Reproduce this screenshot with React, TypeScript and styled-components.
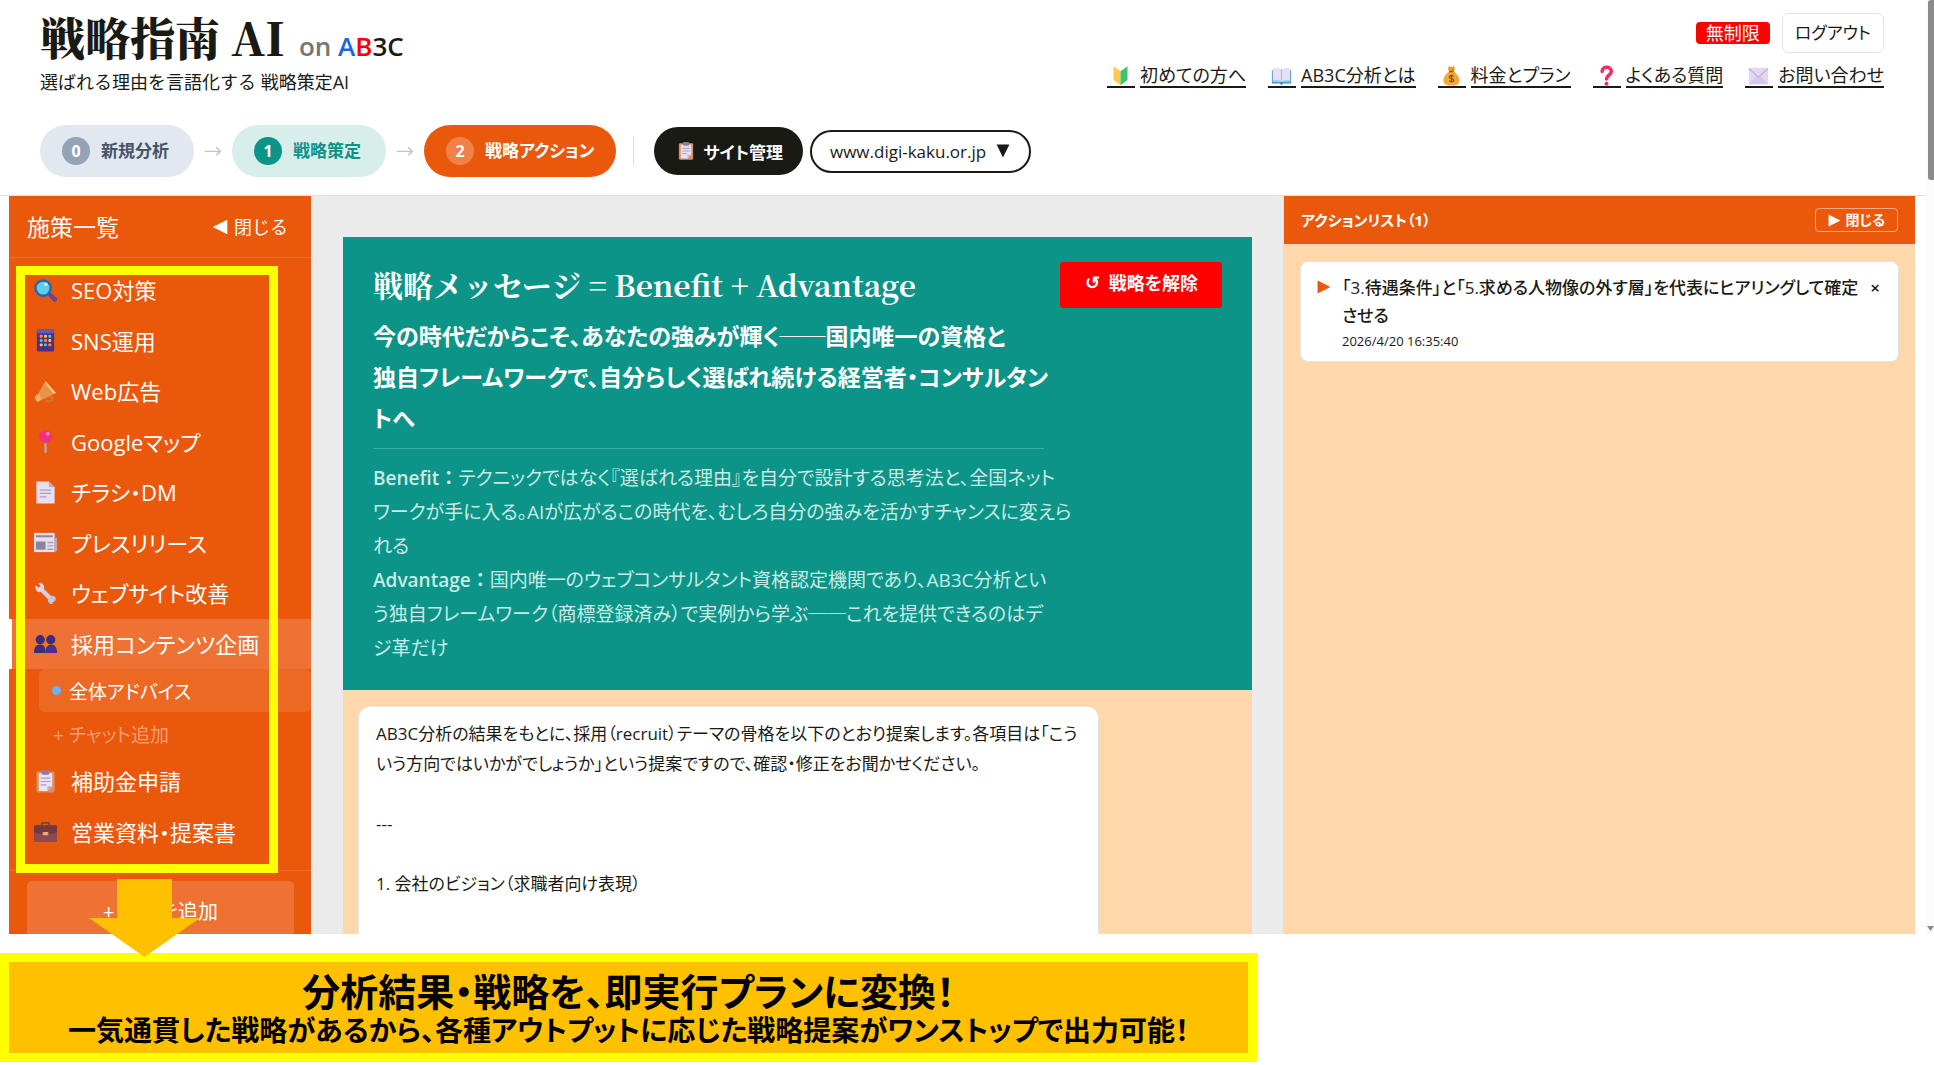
import React from "react";
import styled, { createGlobalStyle, css } from "styled-components";

const sans = `"Open Sans", "Noto Sans CJK JP", sans-serif`;
const serif = `"Noto Serif CJK JP", "Noto Serif JP", "Liberation Serif", "Noto Sans CJK JP", serif`;

const GlobalStyle = createGlobalStyle`
  *, *::before, *::after { box-sizing: border-box; }
  body {
    margin: 0;
    background: #fff;
    color: #1a1a14;
    font-family: ${sans};
    font-feature-settings: "palt";
  }
  button, select { font: inherit; font-feature-settings: inherit; color: inherit; margin: 0; padding: 0; border: 0; background: none; cursor: pointer; }
  h1, h2, p, ul { margin: 0; padding: 0; }
  ul { list-style: none; }
`;

/* ---------- Page frame ---------- */

const Page = styled.div`
  position: relative;
  display: flex;
  flex-direction: column;
  height: 100vh;
  padding-bottom: 3px;
  overflow: hidden;
`;

const Header = styled.header`
  flex: none;
  display: flex;
  flex-direction: column;
  height: 196px;
  padding: 10px 50px 18px 40px;
  border-bottom: 1px solid #e0e0e0;
`;

const HeaderTop = styled.div`
  flex: 1;
  display: flex;
  justify-content: space-between;
  align-items: flex-start;
`;

const Brand = styled.h1`
  display: flex;
  align-items: baseline;
  gap: 14px;
  font-family: ${serif};
  font-size: 45px;
  font-weight: 900;
  line-height: 54px;
  white-space: nowrap;
`;

const BrandSub = styled.span`
  font-family: ${sans};
  font-size: 26px;
  font-weight: 600;
  line-height: 30px;
  color: #78756f;
`;

const Ink = styled.span<{ $color: string }>`
  color: ${(p) => p.$color};
`;

const Tagline = styled.p`
  margin-top: 6px;
  font-size: 18px;
  line-height: 24px;
  font-feature-settings: normal;
`;

const HeaderSide = styled.div`
  display: flex;
  flex-direction: column;
  align-items: flex-end;
  gap: 11px;
  padding-top: 3px;
`;

const Account = styled.div`
  display: flex;
  align-items: center;
  gap: 12px;
`;

const PlanBadge = styled.span`
  padding: 0 10px;
  border-radius: 4px;
  background: #ff0000;
  color: #fff;
  font-size: 18px;
  line-height: 22px;
`;

const LogoutButton = styled.button`
  height: 40px;
  padding: 0 12px;
  border: 1px solid #e5e5df;
  border-radius: 6px;
  font-size: 17px;
  line-height: 36px;
`;

const HelpNav = styled.nav`
  display: flex;
  gap: 22px;
`;

const HelpLink = styled.a`
  display: flex;
  align-items: center;
  gap: 5px;
  color: inherit;
  font-size: 18px;
  line-height: 22px;
  text-decoration: none;
  white-space: nowrap;
  span {
    height: 24px;
    border-bottom: 2px solid #1a1a14;
  }
  span:first-child {
    width: 28px;
    padding: 1px 3px 0;
  }
`;

const StepBar = styled.div`
  display: flex;
  align-items: center;
`;

const Arrow = styled.span`
  width: 38px;
  color: #c4c4c4;
  font-size: 18px;
  line-height: 24px;
  text-align: center;
`;

const tones = {
  idle: { bg: "#e2e8f0", fg: "#475569", dot: "#94a3b8" },
  done: { bg: "#d8eeea", fg: "#0d9488", dot: "#0d9488" },
  active: { bg: "#ea580c", fg: "#fff", dot: "#f08149" },
};

const Step = styled.button<{ $tone: keyof typeof tones }>`
  display: flex;
  align-items: center;
  gap: 11px;
  height: 52px;
  padding: 0 ${(p) => (p.$tone === "active" ? 22 : 25)}px 0 22px;
  border-radius: 26px;
  background: ${(p) => tones[p.$tone].bg};
  color: ${(p) => tones[p.$tone].fg};
  font-size: 17px;
  font-weight: 700;
  line-height: 26px;
  white-space: nowrap;
`;

const StepNumber = styled.span<{ $tone: keyof typeof tones }>`
  width: 28px;
  border-radius: 50%;
  background: ${(p) => tones[p.$tone].dot};
  color: #fff;
  font-size: 16px;
  line-height: 28px;
`;

const Divider = styled.span`
  width: 1px;
  height: 30px;
  margin: 0 20px 0 17px;
  background: #dcdcdc;
`;

const SiteButton = styled.button`
  display: flex;
  align-items: center;
  gap: 8px;
  height: 48px;
  padding: 0 20px 0 23px;
  border-radius: 24px;
  background: #1a1a14;
  color: #fff;
  font-size: 17px;
  font-weight: 700;
  white-space: nowrap;
`;

const SitePicker = styled.label`
  display: flex;
  align-items: center;
  gap: 9px;
  height: 43px;
  margin-left: 7px;
  padding: 0 19px 0 18px;
  border: 2px solid #1a1a14;
  border-radius: 22px;
  font-size: 17px;
  font-weight: 500;
  select {
    appearance: none;
    outline: 0;
  }
`;

/* ---------- Workspace ---------- */

const Workspace = styled.main`
  flex: 1;
  min-height: 0;
  display: flex;
  margin: 0 19px 19px 9px;
  overflow: hidden;
  background: #ebebeb;
`;

const Sidebar = styled.aside`
  flex: none;
  width: 303px;
  border-right: 1px solid #f5f0ec;
  background: #ea580c;
  color: #fff;
`;

const SidebarHead = styled.div`
  display: flex;
  align-items: center;
  justify-content: space-between;
  height: 62px;
  padding: 0 23px 0 18px;
  border-bottom: 1px solid rgba(255, 255, 255, 0.15);
`;

const SidebarTitle = styled.h2`
  font-size: 23px;
  font-weight: 400;
  line-height: 30px;
`;

const SidebarToggle = styled.button`
  display: flex;
  align-items: center;
  gap: 6px;
  font-size: 18px;
  line-height: 24px;
  font-feature-settings: normal;
`;

const MenuList = styled.ul`
  display: flex;
  flex-direction: column;
  min-height: 613px;
  padding: 7px 0 13px;
  border-bottom: 1px solid rgba(255, 255, 255, 0.15);
`;

const MenuItem = styled.li<{ $active?: boolean }>`
  flex: 1;
  display: flex;
  border-left: 3px solid transparent;
  ${(p) =>
    p.$active &&
    css`
      border-left-color: #fff;
      background: rgba(255, 255, 255, 0.16);
    `}
`;

const MenuButton = styled.button`
  flex: 1;
  display: flex;
  align-items: center;
  gap: 14px;
  padding: 0 22px;
  font-size: 22px;
  line-height: 30px;
  text-align: left;
  white-space: nowrap;
`;

const SubItem = styled.li`
  flex: none;
  margin-left: 30px;
  border-radius: 6px;
  background: rgba(255, 255, 255, 0.1);
`;

const SubButton = styled.button`
  display: flex;
  align-items: center;
  gap: 8px;
  height: 43px;
  padding: 0 13px;
  font-size: 19px;
  white-space: nowrap;
`;

const Dot = styled.i`
  width: 9px;
  height: 9px;
  border-radius: 50%;
  background: #66b2ff;
`;

const AddChat = styled.button`
  height: 44px;
  margin-left: 44px;
  color: rgba(255, 255, 255, 0.42);
  font-size: 19px;
  text-align: left;
`;

const AddPlan = styled.button`
  display: block;
  width: calc(100% - 35px);
  height: 58px;
  margin: 10px 17px 0 18px;
  border-radius: 5px;
  background: rgba(255, 255, 255, 0.16);
  font-size: 20px;
`;

const Center = styled.section`
  flex: 1;
  min-width: 0;
  padding: 41px 31px 0;
`;

const Strategy = styled.div`
  display: flex;
  justify-content: space-between;
  align-items: flex-start;
  gap: 15px;
  height: 453px;
  padding: 25px 30px 0 30px;
  background: #0d9488;
  color: #fff;
`;

const StrategyBody = styled.div`
  flex: none;
  width: 671px;
  white-space: nowrap;
`;

const StrategyTitle = styled.h2`
  font-family: ${serif};
  font-size: 30px;
  font-weight: 700;
  line-height: 44px;
  font-feature-settings: normal;
`;

const StrategyMessage = styled.p`
  margin-top: 10px;
  padding-bottom: 9px;
  border-bottom: 1px solid rgba(255, 255, 255, 0.2);
  font-size: 23px;
  font-weight: 700;
  line-height: 41px;
`;

const StrategyDetail = styled.p`
  margin-top: 12px;
  color: #c8ebe5;
  font-size: 19px;
  line-height: 34px;
  b {
    font-weight: 600;
    font-feature-settings: normal;
  }
`;

const ReleaseButton = styled.button`
  display: flex;
  align-items: center;
  gap: 9px;
  height: 46px;
  padding: 0 24px 7px 25px;
  border-radius: 3px;
  background: #ff0000;
  font-size: 18px;
  font-weight: 700;
  white-space: nowrap;
`;

const ChatArea = styled.div`
  min-height: 400px;
  padding: 16px 15px;
  background: #fed7aa;
`;

const Bubble = styled.div`
  width: 741px;
  min-height: 400px;
  padding: 12px 17px;
  border: 1px solid #e5e5df;
  border-radius: 12px;
  background: #fff;
  font-size: 17px;
  line-height: 30px;
  white-space: nowrap;
`;

const ActionPanel = styled.aside`
  flex: none;
  width: 632px;
  border-left: 1px solid #e5e0da;
  background: #fed7aa;
`;

const ActionHead = styled.div`
  display: flex;
  align-items: center;
  justify-content: space-between;
  height: 49px;
  padding: 0 17px;
  border-bottom: 1px solid #f5d3bb;
  background: #ea580c;
  color: #fff;
  font-weight: 700;
`;

const ActionTitle = styled.h2`
  font-size: 15px;
  line-height: 24px;
`;

const ActionToggle = styled.button`
  display: flex;
  align-items: center;
  gap: 4px;
  height: 24px;
  padding: 0 12px;
  border: 1px solid rgba(255, 255, 255, 0.5);
  border-radius: 4px;
  font-size: 14px;
  line-height: 20px;
`;

const ActionCard = styled.article`
  display: flex;
  align-items: flex-start;
  margin: 16px;
  padding: 12px 18px 9px 16px;
  border: 1px solid #e5e5df;
  border-radius: 8px;
  background: #fff;
`;

const Marker = styled.span`
  flex: none;
  width: 25px;
  line-height: 28px;
`;

const ActionText = styled.div`
  flex: 1;
  min-width: 0;
  font-size: 17px;
  font-weight: 500;
  line-height: 28px;
`;

const ActionTime = styled.time`
  display: block;
  font-size: 13px;
  font-weight: 400;
  line-height: 22px;
`;

const RemoveButton = styled.button`
  font-size: 17px;
  font-weight: 600;
  line-height: 28px;
`;

/* ---------- Promotional callout ---------- */

const Highlight = styled.div`
  position: absolute;
  left: 16px;
  top: 266px;
  width: 262px;
  height: 607px;
  border: 9px solid #ffff00;
  pointer-events: none;
`;

const DownArrow = styled.svg`
  position: absolute;
  left: 89px;
  top: 879px;
  width: 111px;
  height: 78px;
  pointer-events: none;
`;

const Banner = styled.section`
  flex: none;
  width: 65%;
  height: 109px;
  padding: 9px 0 0;
  border: 9px solid #ffff00;
  background: #ffc000;
  color: #000;
  font-family: "Liberation Sans", "Noto Sans CJK JP", sans-serif;
  font-weight: 700;
  text-align: center;
  white-space: nowrap;
`;

const BannerTitle = styled.p`
  font-size: 38px;
  line-height: 44px;
`;

const BannerText = styled.p`
  font-size: 28px;
  line-height: 34px;
`;

const ScrollTrack = styled.div`
  position: absolute;
  top: 0;
  right: 0;
  width: 8px;
  height: 934px;
  background: #fcfcfc;
`;

const ScrollThumb = styled.div`
  width: 6px;
  height: 180px;
  margin-left: 2px;
  border-radius: 3px 0 0 3px;
  background: #8b8b8b;
`;

const ScrollEnd = styled.svg`
  position: absolute;
  left: 1px;
  bottom: 2px;
`;

/* ---------- Drawings ---------- */

const IconSvg = styled.svg`
  display: block;
  flex: none;
`;

const Svg = ({ size = 23, children }: { size?: number; children: React.ReactNode }) => (
  <IconSvg width={size} height={size} viewBox="0 0 24 24" aria-hidden="true">
    {children}
  </IconSvg>
);

const Triangle = ({ dir, size, color = "currentColor" }: { dir: "left" | "right" | "down"; size: number; color?: string }) => {
  const d = { left: "M23 1v22L1 12z", right: "M1 1v22l22-11z", down: "M1 1h22L12 23z" }[dir];
  return (
    <svg width={size} height={size} viewBox="0 0 24 24" aria-hidden="true">
      <path d={d} fill={color} />
    </svg>
  );
};

const clipboard = (
  <>
    <rect x="2.5" y="1.5" width="19" height="22" rx="1.5" fill="#d9905f" />
    <path d="M5 3.5h14v14L14 22H5z" fill="#e9e2f3" />
    <path d="M19 17h-5v5z" fill="#b8a9d0" />
    <rect x="8" y="0" width="8" height="5" rx="1.5" fill="#8d7f9c" />
    <path d="M7 8.500h10M7 12h10M7 15.500h6" stroke="#a99bbb" strokeWidth="1.300" />
  </>
);

const icons: Record<string, React.ReactNode> = {
  search: (
    <>
      <path d="M15 15l7 6.500" stroke="#6b4391" strokeWidth="4.500" strokeLinecap="round" />
      <circle cx="9.500" cy="9.500" r="8" fill="#62cdea" stroke="#256aa5" strokeWidth="2.600" />
      <circle cx="12.500" cy="5.500" r="1.800" fill="#c6f3fb" />
    </>
  ),
  phone: (
    <>
      <rect x="3" y="0.500" width="18" height="23" rx="1.500" fill="#4c2f86" />
      <rect x="3" y="0.500" width="18" height="4" rx="1.500" fill="#5b5fc0" />
      {[6.5, 11, 15.5].map((y, r) =>
        [6, 10.5, 15].map((x, c) => (
          <rect key={`${x}${y}`} x={x} y={y - 0.5} width="3" height="3" rx="1" fill={["#ff8a3c", "#ffc83c", "#3cc8f0"][(r * 2 + c) % 3]} />
        ))
      )}
    </>
  ),
  megaphone: (
    <>
      <path d="M12 20c0-3 6-5 7-1s-6 4-6 2" fill="none" stroke="#d17a3a" strokeWidth="2" />
      <path d="M4 15L12 1l11 12.500L7 21z" fill="#e9934b" />
      <path d="M12 1l11 12.500-3 .5L11.500 3z" fill="#ffc372" />
      <path d="M1 17l4-3 3 6.500-4 2.500c-2-1-3-3-3-6z" fill="#ffae69" />
    </>
  ),
  pin: (
    <>
      <path d="M12 11v12" stroke="#b9a8ae" strokeWidth="2.400" strokeLinecap="round" />
      <circle cx="12" cy="7" r="6.800" fill="#f2307a" />
      <circle cx="14.500" cy="4" r="1.900" fill="#ff9ac4" />
    </>
  ),
  page: (
    <>
      <path d="M2.500 .5h13L21.500 6.500v17h-19z" fill="#e8e0f2" />
      <path d="M15.500 .5v6h6z" fill="#b9a9d2" />
      <path d="M6 9.500h12M6 13h12M6 16.500h7" stroke="#a99bbb" strokeWidth="1.300" />
    </>
  ),
  news: (
    <>
      <path d="M0 2h21.500v20H0z" fill="#e6dff0" />
      <path d="M21.500 7H24v14l-2.500 1z" fill="#b6a9c9" />
      <path d="M2 5.500h17.500" stroke="#8d819b" strokeWidth="2" />
      <rect x="2" y="11" width="10" height="8.500" fill="#8d819b" />
      <path d="M14 12h6M14 15.500h6M14 19h6" stroke="#a99bbb" strokeWidth="1.500" />
    </>
  ),
  wrench: (
    <>
      <path d="M7 7l12 12" stroke="#d6cce2" strokeWidth="4.600" strokeLinecap="round" />
      <path d="M2 3.500l3.500 3 1.800-1.800L4.500 1.500C8 0 11.500 3 10.500 7L7 10.500C3 11.500 .5 7.500 2 3.500z" fill="#ded5e8" />
      <path d="M22 20l-3-2-2 1.500 3 3c-3 1.500-6-1-5.500-4.500L18 14.500c3.500-.5 6 2.500 4 5.500z" fill="#cbbfd9" />
    </>
  ),
  people: (
    <>
      <circle cx="6.500" cy="8" r="4.800" fill="#3f2a7d" />
      <circle cx="17.500" cy="8" r="4.800" fill="#3f2a7d" />
      <path d="M0 22c0-6 2-9 6.500-9s5.500 3 5.500 9z" fill="#3f2a7d" />
      <path d="M12 22c0-6 2-9 6-9s6 3 6 9z" fill="#4a2f85" />
    </>
  ),
  clipboard,
  briefcase: (
    <>
      <path d="M8 6V4.500Q8 3 9.500 3h5Q16 3 16 4.500V6" fill="none" stroke="#5b4860" strokeWidth="1.800" />
      <rect x="0" y="5.500" width="24" height="17.500" rx="1.500" fill="#8a4a50" />
      <path d="M1.500 5.500h21Q24 5.500 24 7v6L15 15H9L0 13V7Q0 5.500 1.500 5.500z" fill="#74383f" />
      <rect x="9" y="12.500" width="6" height="3.500" rx=".8" fill="#f3a27d" />
    </>
  ),
  beginner: (
    <>
      <path d="M4 1.500l8 5.500v16l-8-6z" fill="#ffc94a" />
      <path d="M20 1.500L12 7v16l8-6z" fill="#3fc46b" />
    </>
  ),
  book: (
    <>
      <path d="M1 6h22v15h-9l-2 2-2-2H1z" fill="#3f95d8" />
      <path d="M2 4Q8 2 12 5Q16 2 22 4V18Q16 17 12 19Q8 17 2 18z" fill="#e6e0f5" />
      <path d="M12 5v14" stroke="#a9bfe4" strokeWidth="1.400" />
      <path d="M2 17Q8 16 12 19Q16 16 22 17v2.500H2z" fill="#9ccff2" />
    </>
  ),
  money: (
    <>
      <path d="M9 1l3 1.500L15 1l1 4-2 3h-4L8 5z" fill="#e79a2c" />
      <path d="M10 7h4c5 3 8 8 7 12q-1 4.500-9 4.500T3 19C2 15 5 10 10 7z" fill="#f2a935" />
      <path d="M9.500 7.500h5" stroke="#9a5b2d" strokeWidth="1.600" />
      <path d="M14.500 13c-2-1.800-5-1-5 .7 0 2.300 5 1.300 5 3.600 0 1.800-3 2.400-5 .5M12 11v9" fill="none" stroke="#8a5120" strokeWidth="1.400" />
    </>
  ),
  question: (
    <>
      <path d="M7 7.500C7 1 17.500 1 17.500 7.500c0 4.500-5.500 4-5.500 8.500" fill="none" stroke="#ee2d66" strokeWidth="4" strokeLinecap="round" />
      <circle cx="12" cy="21.500" r="2.300" fill="#ee2d66" />
    </>
  ),
  mail: (
    <>
      <rect x="1" y="3" width="22" height="19" rx="1" fill="#e3d8f3" />
      <path d="M1 22l8.500-9h5L23 22z" fill="#d6c6ee" />
      <path d="M1 4l11 10L23 4" fill="none" stroke="#c3b0e0" strokeWidth="1.200" />
    </>
  ),
};

/* ---------- Content ---------- */

const helpLinks = [
  ["beginner", "初めての方へ"],
  ["book", "AB3C分析とは"],
  ["money", "料金とプラン"],
  ["question", "よくある質問"],
  ["mail", "お問い合わせ"],
];

const plans = [
  ["search", "SEO対策"],
  ["phone", "SNS運用"],
  ["megaphone", "Web広告"],
  ["pin", "Googleマップ"],
  ["page", "チラシ・DM"],
  ["news", "プレスリリース"],
  ["wrench", "ウェブサイト改善"],
  ["people", "採用コンテンツ企画"],
  ["clipboard", "補助金申請"],
  ["briefcase", "営業資料・提案書"],
];

export default function App() {
  return (
    <Page>
      <GlobalStyle />
      <Header>
        <HeaderTop>
          <div>
            <Brand>
              戦略指南 AI
              <BrandSub>
                on <Ink $color="#1668dc">A</Ink>
                <Ink $color="#ff0000">B</Ink>
                <Ink $color="#1a1a14">3C</Ink>
              </BrandSub>
            </Brand>
            <Tagline>選ばれる理由を言語化する 戦略策定AI</Tagline>
          </div>
          <HeaderSide>
            <Account>
              <PlanBadge>無制限</PlanBadge>
              <LogoutButton>ログアウト</LogoutButton>
            </Account>
            <HelpNav>
              {helpLinks.map(([icon, label]) => (
                <HelpLink href="#" key={label}>
                  <span>
                    <Svg size={21}>{icons[icon]}</Svg>
                  </span>
                  <span>{label}</span>
                </HelpLink>
              ))}
            </HelpNav>
          </HeaderSide>
        </HeaderTop>
        <StepBar>
          <Step $tone="idle">
            <StepNumber $tone="idle">0</StepNumber>新規分析
          </Step>
          <Arrow>→</Arrow>
          <Step $tone="done">
            <StepNumber $tone="done">1</StepNumber>戦略策定
          </Step>
          <Arrow>→</Arrow>
          <Step $tone="active">
            <StepNumber $tone="active">2</StepNumber>戦略アクション
          </Step>
          <Divider />
          <SiteButton>
            <Svg size={18}>{icons.clipboard}</Svg>サイト管理
          </SiteButton>
          <SitePicker>
            <select aria-label="サイト">
              <option>www.digi-kaku.or.jp</option>
            </select>
            <Triangle dir="down" size={14} />
          </SitePicker>
        </StepBar>
      </Header>

      <Workspace>
        <Sidebar>
          <SidebarHead>
            <SidebarTitle>施策一覧</SidebarTitle>
            <SidebarToggle>
              <Triangle dir="left" size={16} />
              閉じる
            </SidebarToggle>
          </SidebarHead>
          <MenuList>
            {plans.map(([icon, label]) => {
              const active = icon === "people";
              return (
                <React.Fragment key={label}>
                  <MenuItem $active={active}>
                    <MenuButton>
                      <Svg>{icons[icon]}</Svg>
                      {label}
                    </MenuButton>
                  </MenuItem>
                  {active && (
                    <>
                      <SubItem>
                        <SubButton>
                          <Dot />
                          全体アドバイス
                        </SubButton>
                      </SubItem>
                      <li>
                        <AddChat>+ チャット追加</AddChat>
                      </li>
                    </>
                  )}
                </React.Fragment>
              );
            })}
          </MenuList>
          <AddPlan>+ 施策を追加</AddPlan>
        </Sidebar>

        <Center>
          <Strategy>
            <StrategyBody>
              <StrategyTitle>戦略メッセージ = Benefit + Advantage</StrategyTitle>
              <StrategyMessage>
                今の時代だからこそ、あなたの強みが輝く──国内唯一の資格と
                <br />
                独自フレームワークで、自分らしく選ばれ続ける経営者・コンサルタン
                <br />
                トへ
              </StrategyMessage>
              <StrategyDetail>
                <b>Benefit：</b>テクニックではなく『選ばれる理由』を自分で設計する思考法と、全国ネット
                <br />
                ワークが手に入る。AIが広がるこの時代を、むしろ自分の強みを活かすチャンスに変えら
                <br />
                れる
                <br />
                <b>Advantage：</b>国内唯一のウェブコンサルタント資格認定機関であり、AB3C分析とい
                <br />
                う独自フレームワーク（商標登録済み）で実例から学ぶ──これを提供できるのはデ
                <br />
                ジ革だけ
              </StrategyDetail>
            </StrategyBody>
            <ReleaseButton>
              <span>↺</span>戦略を解除
            </ReleaseButton>
          </Strategy>
          <ChatArea>
            <Bubble>
              <p>
                AB3C分析の結果をもとに、採用（recruit）テーマの骨格を以下のとおり提案します。各項目は「こう
                <br />
                いう方向ではいかがでしょうか」という提案ですので、確認・修正をお聞かせください。
                <br />
                <br />
                ---
                <br />
                <br />
                1. 会社のビジョン（求職者向け表現）
              </p>
            </Bubble>
          </ChatArea>
        </Center>

        <ActionPanel>
          <ActionHead>
            <ActionTitle>アクションリスト（1）</ActionTitle>
            <ActionToggle>
              <Triangle dir="right" size={13} />
              閉じる
            </ActionToggle>
          </ActionHead>
          <ActionCard>
            <Marker>
              <Triangle dir="right" size={14} color="#ea580c" />
            </Marker>
            <ActionText>
              「3.待遇条件」と「5.求める人物像の外す層」を代表にヒアリングして確定
              <br />
              させる
              <ActionTime>2026/4/20 16:35:40</ActionTime>
            </ActionText>
            <RemoveButton aria-label="削除">×</RemoveButton>
          </ActionCard>
        </ActionPanel>
      </Workspace>

      <Banner>
        <BannerTitle>分析結果・戦略を、即実行プランに変換！</BannerTitle>
        <BannerText>一気通貫した戦略があるから、各種アウトプットに応じた戦略提案がワンストップで出力可能！</BannerText>
      </Banner>

      <Highlight />
      <DownArrow viewBox="0 0 111 78" aria-hidden="true">
        <path d="M28 0h55v39h28L55.500 78 0 39h28z" fill="#ffc000" />
      </DownArrow>
      <ScrollTrack>
        <ScrollThumb />
        <ScrollEnd width="7" height="7" viewBox="0 0 7 7" aria-hidden="true">
          <path d="M0 1h7L3.500 6z" fill="#8b8b8b" />
        </ScrollEnd>
      </ScrollTrack>
    </Page>
  );
}
